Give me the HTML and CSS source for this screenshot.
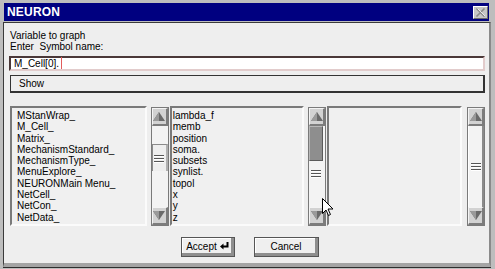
FILE: index.html
```html
<!DOCTYPE html>
<html>
<head>
<meta charset="utf-8">
<link rel="stylesheet" href="styles.css">
</head>
<body>
<div class="window">
  <div class="titlebar">
    <span class="title">NEURON</span>
    <span class="close">
      <svg width="11" height="9" viewBox="0 0 11 9"><path d="M1.5 0.5 L9.5 8.5 M9.5 0.5 L1.5 8.5" stroke="#8a8a8a" stroke-width="1.6" fill="none"/><path d="M2.5 0.5 L10 8" stroke="#ffffff" stroke-width="0.8" fill="none"/></svg>
    </span>
  </div>
  <div class="client">
    <div class="label">Variable to graph</div>
    <div class="label">Enter&nbsp; Symbol name:</div>
    <div class="field"><span>M_Cell[0].</span><span class="caret"></span></div>
    <div class="show">Show</div>
    <div class="lists">
      <div class="list list1">
        <div>MStanWrap_</div>
        <div>M_Cell_</div>
        <div>Matrix_</div>
        <div>MechanismStandard_</div>
        <div>MechanismType_</div>
        <div>MenuExplore_</div>
        <div>NEURONMain Menu_</div>
        <div>NetCell_</div>
        <div>NetCon_</div>
        <div>NetData_</div>
      </div>
      <div class="sb sb1">
        <div class="btn up"><svg width="12" height="9" viewBox="0 0 12 9"><polygon points="6,0 12,9 0,9" fill="#6a6a6a"/><polygon points="6,0 6,9 0,9" fill="#9a9a9a"/></svg></div>
        <div class="track">
          <div class="thumb1"><div class="grip"><i></i><i></i><i></i></div></div>
        </div>
        <div class="btn down"><svg width="12" height="9" viewBox="0 0 12 9"><polygon points="0,0 12,0 6,9" fill="#6a6a6a"/><polygon points="0,0 6,0 6,9" fill="#9a9a9a"/></svg></div>
      </div>
      <div class="list list2">
        <div>lambda_f</div>
        <div>memb</div>
        <div>position</div>
        <div>soma.</div>
        <div>subsets</div>
        <div>synlist.</div>
        <div>topol</div>
        <div>x</div>
        <div>y</div>
        <div>z</div>
      </div>
      <div class="sb sb2">
        <div class="btn up"><svg width="12" height="9" viewBox="0 0 12 9"><polygon points="6,0 12,9 0,9" fill="#6a6a6a"/><polygon points="6,0 6,9 0,9" fill="#9a9a9a"/></svg></div>
        <div class="track">
          <div class="thumb2"></div>
          <div class="grip grip2"><i></i><i></i><i></i></div>
        </div>
        <div class="btn down"><svg width="12" height="9" viewBox="0 0 12 9"><polygon points="0,0 12,0 6,9" fill="#6a6a6a"/><polygon points="0,0 6,0 6,9" fill="#9a9a9a"/></svg></div>
      </div>
      <div class="list list3"></div>
      <div class="sb sb3">
        <div class="btn up"><svg width="12" height="9" viewBox="0 0 12 9"><polygon points="6,0 12,9 0,9" fill="#6a6a6a"/><polygon points="6,0 6,9 0,9" fill="#9a9a9a"/></svg></div>
        <div class="track track3">
          <div class="grip"><i></i><i></i><i></i></div>
        </div>
        <div class="btn down"><svg width="12" height="9" viewBox="0 0 12 9"><polygon points="0,0 12,0 6,9" fill="#6a6a6a"/><polygon points="0,0 6,0 6,9" fill="#9a9a9a"/></svg></div>
      </div>
    </div>
    <div class="actions">
      <div class="pbtn accept"><span>Accept</span><svg class="ret" width="9" height="8" viewBox="0 0 9 8"><path d="M6.5 0 H8.5 V5.5 H3.5 V7.5 L0 4.5 L3.5 1.5 V3.5 H6.5 Z" fill="#000"/></svg></div>
      <div class="pbtn cancel">Cancel</div>
    </div>
  </div>
  <svg class="pointer" width="12" height="19" viewBox="0 0 12 19"><path d="M0.5 0.5 V15.5 L4 12 L6.5 17.5 L8.5 16.5 L6 11 H11 Z" fill="#fff" stroke="#000" stroke-width="1"/></svg>
</div>
</body>
</html>
```
FILE: styles.css
```css
html, body {
  margin: 0;
  padding: 0;
  background: #bdbdbd;
}
.window {
  position: relative;
  width: 495px;
  height: 269px;
  box-sizing: border-box;
  padding: 3px 4px 2px 3px;
  background: #bdbdbd;
  display: flex;
  flex-direction: column;
  font-family: "Liberation Sans", Arial, sans-serif;
  font-size: 10px;
  color: #000;
  overflow: hidden;
}
.titlebar {
  height: 18px;
  margin: 0 2px 0 1px;
  background: #000080;
  display: flex;
  align-items: center;
  justify-content: space-between;
  padding: 0 1px 0 3px;
  flex: none;
}
.title {
  color: #fff;
  font-weight: bold;
  font-size: 12px;
  line-height: 14px;
  letter-spacing: 0.2px;
}
.close {
  width: 15px;
  height: 13px;
  box-sizing: border-box;
  background: #c6c6c6;
  border-top: 1px solid #fff;
  border-left: 1px solid #fff;
  border-right: 1px solid #6a6a6a;
  border-bottom: 1px solid #6a6a6a;
  display: flex;
  align-items: center;
  justify-content: center;
}
.client {
  margin-top: 1px;
  flex: 1;
  min-height: 0;
  background: #eeeeee;
  border-top: 1px solid #3a3a3a;
  border-left: 1px solid #3a3a3a;
  border-right: 2px solid #8a8a8a;
  border-bottom: 4px solid #a4a4a4;
  box-shadow: 0 1px 0 #2e2e2e;
  padding: 7px 4px 0 5px;
  display: flex;
  flex-direction: column;
}
.label {
  line-height: 11px;
  margin-left: 1px;
  white-space: nowrap;
}
.field {
  margin-top: 4px;
  height: 15px;
  flex: none;
  box-sizing: border-box;
  background: #fff;
  border-top: 2px solid #4a3838;
  border-left: 2px solid #4a3838;
  border-right: 2px solid #e2cccc;
  border-bottom: 2px solid #e2cccc;
  padding-left: 3px;
  line-height: 11px;
  display: flex;
  align-items: flex-start;
}
.caret {
  display: inline-block;
  width: 1px;
  height: 12px;
  margin-top: -1px;
  margin-left: 2px;
  background: #e25c5c;
}
.show {
  margin-top: 4px;
  margin-left: 1px;
  height: 18px;
  flex: none;
  box-sizing: border-box;
  border-top: 1px solid #333;
  border-left: 1px solid #333;
  border-right: 2px solid #333;
  border-bottom: 2px solid #333;
  background: #eeeeee;
  padding: 2px 0 0 8px;
  line-height: 11px;
}
.lists {
  margin-top: 13px;
  margin-left: 1px;
  height: 120px;
  flex: none;
  display: flex;
}
.list {
  box-sizing: border-box;
  height: 120px;
  background: #f0f0f0;
  border-style: solid;
  border-width: 2px;
  border-color: #7a7a7a #fbfbfb #fbfbfb #7a7a7a;
  line-height: 11.3px;
  padding-top: 2px;
  white-space: nowrap;
  overflow: hidden;
}
.list1 { width: 137px; padding-left: 5px; }
.list2 { width: 135px; padding-left: 1px; margin-left: 1px; }
.list3 { width: 135px; margin-left: 1px; }
.sb {
  width: 18px;
  height: 119px;
  margin-top: 1px;
  box-sizing: border-box;
  border: 1px solid #7a7a7a;
  background: #f2f2f2;
  display: flex;
  flex-direction: column;
}
.sb1 { margin-left: 4px; }
.sb2 { margin-left: 4px; }
.sb3 { margin-left: 5px; }
.btn {
  height: 18px;
  flex: none;
  box-sizing: border-box;
  background: #d2d2d2;
  border-top: 1px solid #f4f4f4;
  border-left: 1px solid #f4f4f4;
  border-right: 2px solid #7c7c7c;
  border-bottom: 2px solid #7c7c7c;
  display: flex;
  align-items: center;
  justify-content: center;
}
.btn svg { display: block; }
.track {
  flex: 1;
  display: flex;
  flex-direction: column;
  background: #f3f3f3;
}
.thumb1 {
  margin-top: 18px;
  height: 27px;
  box-sizing: border-box;
  border-top: 1px solid #8a8a8a;
  border-left: 1px solid #8a8a8a;
  border-right: 2px solid #b0b0b0;
  background: #eeeeee;
  display: flex;
  align-items: center;
  justify-content: center;
}
.grip {
  display: flex;
  flex-direction: column;
  gap: 2px;
  align-items: center;
}
.grip i {
  display: block;
  width: 10px;
  height: 1px;
  background: #555;
  box-shadow: 0 1px 0 #fff;
}
.thumb2 {
  height: 35px;
  box-sizing: border-box;
  background: #8e8e8e;
  border: 1px solid #5a5a5a;
  border-top-color: #b8b8b8;
  border-left-color: #b8b8b8;
  margin-right: 2px;
}
.grip2 {
  margin-top: 9px;
  align-items: flex-start;
  padding-left: 2px;
}
.track3 {
  border-right: 2px solid #8a8a8a;
  border-left: 1px solid #fff;
  justify-content: center;
  align-items: center;
}
.actions {
  margin-top: 11px;
  display: flex;
  justify-content: center;
  gap: 19px;
  padding-left: 5px;
}
.pbtn {
  height: 20px;
  box-sizing: border-box;
  border: 1px solid #555;
  background: #efefef;
  box-shadow: inset -3px -3px 0 #8e8e8e, inset 1px 1px 0 #fff;
  display: flex;
  align-items: center;
  justify-content: center;
  line-height: 11px;
  padding-bottom: 2px;
  white-space: nowrap;
}
.accept { width: 54px; gap: 3px; }
.cancel { width: 65px; }
.ret { display: block; }
.pointer {
  position: absolute;
  left: 322px;
  top: 198px;
}
```
